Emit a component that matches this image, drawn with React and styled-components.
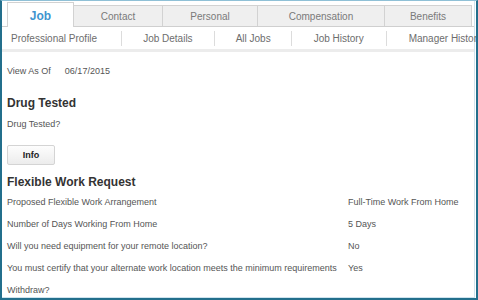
import React from "react";
import styled, { createGlobalStyle } from "styled-components";

const Global = createGlobalStyle`
  html, body { margin: 0; padding: 0; background: #fff; }
  body { font-family: "Liberation Sans", Arial, sans-serif; }
`;

const Frame = styled.div`
  box-sizing: border-box;
  width: 478px;
  height: 300px;
  overflow: hidden;
  border-left: 2px solid #236f8c;
  border-right: 2px solid #236f8c;
  border-bottom: 2px solid #236f8c;
  border-top: 1px solid #8fc0d6;
  position: relative;
  background: #fff;
`;

const InnerEdge = styled.div`
  box-sizing: border-box;
  height: 100%;
  border-right: 1px solid #cfe3ee;
  border-bottom: 1px solid #cfe3ee;
  margin-right: 1px;
  margin-bottom: 1px;
`;

const TabBar = styled.div`
  display: flex;
  align-items: flex-end;
  height: 25px;
  padding-left: 5px;
  border-bottom: 1px solid #cfcfcf;
`;

const Tab = styled.div`
  box-sizing: border-box;
  width: ${(p) => p.$w}px;
  height: ${(p) => (p.$active ? 25 : 21)}px;
  display: flex;
  align-items: center;
  justify-content: center;
  background: ${(p) => (p.$active ? "#fff" : "#efefef")};
  border: 1px solid #d2d2d2;
  border-left-width: ${(p) => (p.$first || p.$active ? 1 : 0)}px;
  border-bottom: none;
  margin-bottom: ${(p) => (p.$active ? -1 : 0)}px;
  color: ${(p) => (p.$active ? "#3f95cf" : "#7a7a7a")};
  font-size: ${(p) => (p.$active ? 12 : 10)}px;
  font-weight: ${(p) => (p.$active ? 700 : 400)};
  padding-top: ${(p) => (p.$active ? 1 : 0)}px;
`;

const SubNav = styled.div`
  display: flex;
  align-items: center;
  height: 22px;
  padding-left: 9px;
  border-bottom: 3px solid #ececec;
  white-space: nowrap;
`;

const SubItem = styled.span`
  font-size: 10px;
  color: #6d6d6d;
`;

const Sep = styled.span`
  width: 1px;
  height: 15px;
  background: #dcdcdc;
  margin: 0 ${(p) => p.$r}px 0 ${(p) => p.$l}px;
  flex: none;
`;

const Body = styled.div`
  padding: 12px 0 0 5px;
  color: #555;
  font-size: 9px;
`;

const AsOf = styled.div`
  display: flex;
  line-height: 14px;
  gap: 14px;
`;

const Heading = styled.div`
  font-size: 12px;
  font-weight: 700;
  color: #333;
  line-height: 16px;
  margin-top: ${(p) => p.$mt}px;
`;

const Line = styled.div`
  line-height: 14px;
  margin-top: 6px;
`;

const Button = styled.div`
  box-sizing: border-box;
  width: 48px;
  height: 20px;
  margin-top: 14px;
  border: 1px solid #d4d4d4;
  border-radius: 2px;
  background: linear-gradient(#fdfdfd, #ececec);
  display: flex;
  align-items: center;
  justify-content: center;
  font-size: 9px;
  font-weight: 700;
  color: #222;
`;

const Row = styled.div`
  display: grid;
  grid-template-columns: 341px 1fr;
  height: 22px;
  align-items: center;
  white-space: nowrap;
`;

const tabs = [
  ["Job", 67, true],
  ["Contact", 89],
  ["Personal", 95],
  ["Compensation", 127],
  ["Benefits", 87],
];

const sub = [
  ["Professional Profile", 0, 24, 21],
  ["Job Details", 0, 21, 21],
  ["All Jobs", 0, 20, 22],
  ["Job History", 0, 22, 22],
  ["Manager History"],
];

const rows = [
  ["Proposed Flexible Work Arrangement", "Full-Time Work From Home"],
  ["Number of Days Working From Home", "5 Days"],
  ["Will you need equipment for your remote location?", "No"],
  ["You must certify that your alternate work location meets the minimum requirements", "Yes"],
  ["Withdraw?", ""],
];

export default function App() {
  return (
    <Frame>
      <Global />
      <InnerEdge>
        <TabBar>
          {tabs.map(([label, w, active], i) => (
            <Tab key={label} $w={w} $active={active} $first={i === 0}>
              {label}
            </Tab>
          ))}
        </TabBar>
        <SubNav>
          {sub.map(([label, , l, r]) => (
            <React.Fragment key={label}>
              <SubItem>{label}</SubItem>
              {l !== undefined && <Sep $l={l} $r={r} />}
            </React.Fragment>
          ))}
        </SubNav>
        <Body>
          <AsOf>
            <span>View As Of</span>
            <span>06/17/2015</span>
          </AsOf>
          <Heading $mt={17}>Drug Tested</Heading>
          <Line>Drug Tested?</Line>
          <Button>Info</Button>
          <Heading $mt={9}>Flexible Work Request</Heading>
          <div style={{ marginTop: 1 }}>
            {rows.map(([l, v]) => (
              <Row key={l}>
                <span>{l}</span>
                <span>{v}</span>
              </Row>
            ))}
          </div>
        </Body>
      </InnerEdge>
    </Frame>
  );
}
